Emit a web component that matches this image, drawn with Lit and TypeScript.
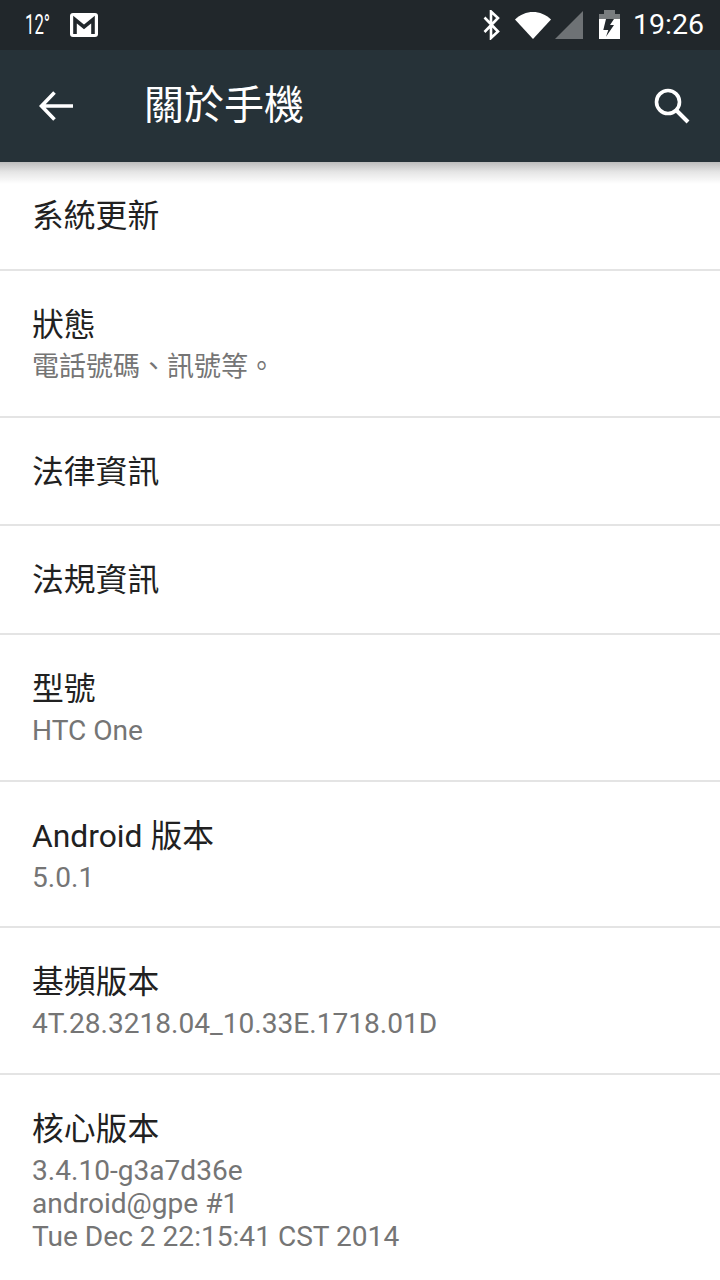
import { LitElement, html, css } from "lit";
import { customElement } from "lit/decorators.js";

const rows: { t: string; s?: string[]; h: number; cjk?: boolean }[] = [
  { t: "系統更新", h: 109 },
  { t: "狀態", s: ["電話號碼、訊號等。"], h: 147, cjk: true },
  { t: "法律資訊", h: 108 },
  { t: "法規資訊", h: 109 },
  { t: "型號", s: ["HTC One"], h: 147 },
  { t: "Android 版本", s: ["5.0.1"], h: 146 },
  { t: "基頻版本", s: ["4T.28.3218.04_10.33E.1718.01D"], h: 147 },
  { t: "核心版本", s: ["3.4.10-g3a7d36e", "android@gpe #1", "Tue Dec 2 22:15:41 CST 2014"], h: 206 },
];

@customElement("app-root")
export class AppRoot extends LitElement {
  static styles = css`
    :host {
      display: block;
      width: 720px;
      height: 1280px;
      overflow: hidden;
      background: #fff;
      font-family: Roboto, "Noto Sans CJK TC", sans-serif;
    }
    .status {
      height: 50px;
      background: #21272b;
      display: flex;
      align-items: center;
      color: #fff;
    }
    .temp {
      margin-left: 25px;
      font-size: 27px;
      line-height: 50px;
      width: 45px;
      transform: scaleX(0.62);
      transform-origin: left center;
      white-space: nowrap;
    }
    .mail { display: block; }
    .spacer { flex: 1; }
    .sicons { display: flex; align-items: center; margin-right: 16px; }
    .clock { font-size: 28.5px; margin-left: 13px; line-height: 50px; }
    .bt { margin-right: 14px; }
    .wifi { margin-right: 4px; }
    .sig { margin-right: 16px; }
    .toolbar {
      position: relative;
      z-index: 1;
      height: 112px;
      background: #263238;
      display: flex;
      align-items: center;
      color: #fff;
    }
    .back { margin-left: 39px; display: block; }
    .title {
      margin-left: 71px;
      font-size: 40px;
      line-height: 112px;
      flex: 1;
    }
    .search { margin-right: 29px; display: block; }
    .shadow {
      position: absolute;
      left: 0;
      right: 0;
      top: 112px;
      height: 22px;
      background: linear-gradient(to bottom, rgba(0,0,0,0.26), rgba(0,0,0,0.1) 45%, rgba(0,0,0,0));
    }
    .row {
      box-sizing: border-box;
      padding: 33px 0 0 32px;
      border-bottom: 2px solid #e4e4e4;
    }
    .row:last-child { border-bottom: none; }
    .t {
      font-size: 31.8px;
      line-height: 42px;
      color: #212121;
      white-space: nowrap;
    }
    .subs { margin-top: 4px; }
    .s {
      font-size: 28.1px;
      line-height: 33px;
      color: #757575;
      white-space: nowrap;
    }
    .s.cjk { font-size: 27px; position: relative; top: 1px; }
  `;

  render() {
    return html`
      <div class="status">
        <span class="temp">12°</span>
        <svg class="mail" width="28" height="24" viewBox="0 0 28 24">
          <rect width="28" height="24" rx="3" fill="#fff"></rect>
          <path d="M5 21V6.500L14 14 23 6.500V21" fill="none" stroke="#21272b" stroke-width="3.600"></path>
        </svg>
        <span class="spacer"></span>
        <div class="sicons">
          <svg class="bt" width="18" height="30" viewBox="0 0 18 30">
            <path d="M1.500 7.500L15 21.500 8 28V1.500L15 8 1.500 22" fill="none" stroke="#fff" stroke-width="2.600"></path>
          </svg>
          <svg class="wifi" width="36" height="28" viewBox="0 0 36 28">
            <path d="M0 8.500C10-1.500 26-1.500 36 8.500L18 28z" fill="#fff"></path>
          </svg>
          <svg class="sig" width="28" height="28" viewBox="0 0 28 28">
            <path d="M0 28L28 0V28z" fill="#fff" fill-opacity="0.35"></path>
          </svg>
          <svg width="21" height="30" viewBox="0 0 21 30">
            <path d="M5 0h11v4h5v5H0V4h5z" fill="#fff" fill-opacity="0.4"></path>
            <path d="M0 9h21v20H0z" fill="#fff"></path>
            <path d="M7 9h8l-4 6h4L7 26.700 9.300 20h-5z" fill="#21272b"></path>
          </svg>
          <span class="clock">19:26</span>
        </div>
      </div>
      <div class="toolbar">
        <svg class="back" width="34" height="34" viewBox="0 0 34 34">
          <path d="M34 17H3M15.500 3.500L2.500 17l13 13.500" fill="none" stroke="#fff" stroke-width="3.600"></path>
        </svg>
        <div class="title">關於手機</div>
        <svg class="search" width="38" height="38" viewBox="0 0 38 38">
          <circle cx="15" cy="15" r="11.500" fill="none" stroke="#fff" stroke-width="3.600"></circle>
          <path d="M23.500 23.500L35 35" fill="none" stroke="#fff" stroke-width="4"></path>
        </svg>
        <div class="shadow"></div>
      </div>
      ${rows.map(
        (r) => html`
          <div class="row" style="height:${r.h}px">
            <div class="t">${r.t}</div>
            ${r.s
              ? html`<div class="subs">${r.s.map((x) => html`<div class="s ${r.cjk ? "cjk" : ""}">${x}</div>`)}</div>`
              : ""}
          </div>
        `
      )}
    `;
  }
}
